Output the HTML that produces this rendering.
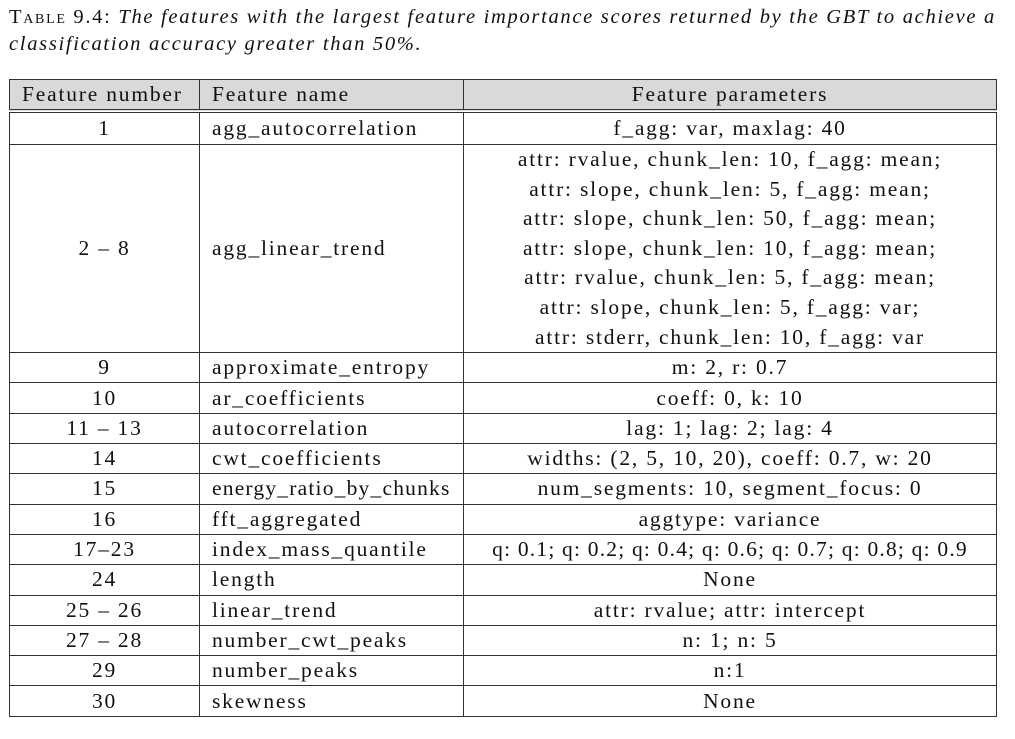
<!DOCTYPE html>
<html><head><meta charset="utf-8"><style>
body{margin:0;background:#fff;font-family:"Liberation Serif",serif;color:#111;width:1015px;height:739px;overflow:hidden;position:relative}
.cap{position:absolute;left:9px;top:4px;font-size:20.5px;line-height:27px;font-style:italic;white-space:nowrap;letter-spacing:1.7px}
.cap .sc{font-style:normal;font-variant:small-caps}
table{position:absolute;left:9px;top:79px;width:988px;table-layout:fixed;border-collapse:collapse;font-size:21.5px;letter-spacing:1.8px}
td{border-left:1.3px solid #333;border-right:1.3px solid #333;padding:0 0 0 12px;height:29.3px;line-height:29px;white-space:nowrap;overflow:visible}
td.c{padding:0}
tr.h td{background:#d9d9d9;border-top:1.3px solid #333;height:29px}
tr.d td{border-top:1.3px solid #333}
tr.dbl td{border-top:4px double #333;height:31px}
tr:last-child td{border-bottom:1.3px solid #333}
.c{text-align:center}
.ml{line-height:29.6px;padding:0}
</style></head><body>
<div class="cap"><span class="sc">Table 9.4:</span> The features with the largest feature importance scores returned by the GBT to achieve a<br>classification accuracy greater than 50%.</div>
<table>
<colgroup><col style="width:190px"><col style="width:264px"><col></colgroup>
<tr class="h"><td>Feature number</td><td>Feature name</td><td class="c">Feature parameters</td></tr>
<tr class="dbl"><td class="c">1</td><td>agg_autocorrelation</td><td class="c">f_agg: var, maxlag: 40</td></tr>
<tr class="d"><td class="c">2 – 8</td><td>agg_linear_trend</td><td class="c ml">attr: rvalue, chunk_len: 10, f_agg: mean;<br>attr: slope, chunk_len: 5, f_agg: mean;<br>attr: slope, chunk_len: 50, f_agg: mean;<br>attr: slope, chunk_len: 10, f_agg: mean;<br>attr: rvalue, chunk_len: 5, f_agg: mean;<br>attr: slope, chunk_len: 5, f_agg: var;<br>attr: stderr, chunk_len: 10, f_agg: var</td></tr>
<tr class="d"><td class="c">9</td><td>approximate_entropy</td><td class="c">m: 2, r: 0.7</td></tr>
<tr class="d"><td class="c">10</td><td>ar_coefficients</td><td class="c">coeff: 0, k: 10</td></tr>
<tr class="d"><td class="c">11 – 13</td><td>autocorrelation</td><td class="c">lag: 1; lag: 2; lag: 4</td></tr>
<tr class="d"><td class="c">14</td><td>cwt_coefficients</td><td class="c">widths: (2, 5, 10, 20), coeff: 0.7, w: 20</td></tr>
<tr class="d"><td class="c">15</td><td style="letter-spacing:1.2px">energy_ratio_by_chunks</td><td class="c">num_segments: 10, segment_focus: 0</td></tr>
<tr class="d"><td class="c">16</td><td>fft_aggregated</td><td class="c">aggtype: variance</td></tr>
<tr class="d"><td class="c">17–23</td><td>index_mass_quantile</td><td class="c" style="letter-spacing:1.2px">q: 0.1; q: 0.2; q: 0.4; q: 0.6; q: 0.7; q: 0.8; q: 0.9</td></tr>
<tr class="d"><td class="c">24</td><td>length</td><td class="c">None</td></tr>
<tr class="d"><td class="c">25 – 26</td><td>linear_trend</td><td class="c">attr: rvalue; attr: intercept</td></tr>
<tr class="d"><td class="c">27 – 28</td><td>number_cwt_peaks</td><td class="c">n: 1; n: 5</td></tr>
<tr class="d"><td class="c">29</td><td>number_peaks</td><td class="c">n:1</td></tr>
<tr class="d"><td class="c">30</td><td>skewness</td><td class="c">None</td></tr>
</table>
</body></html>
